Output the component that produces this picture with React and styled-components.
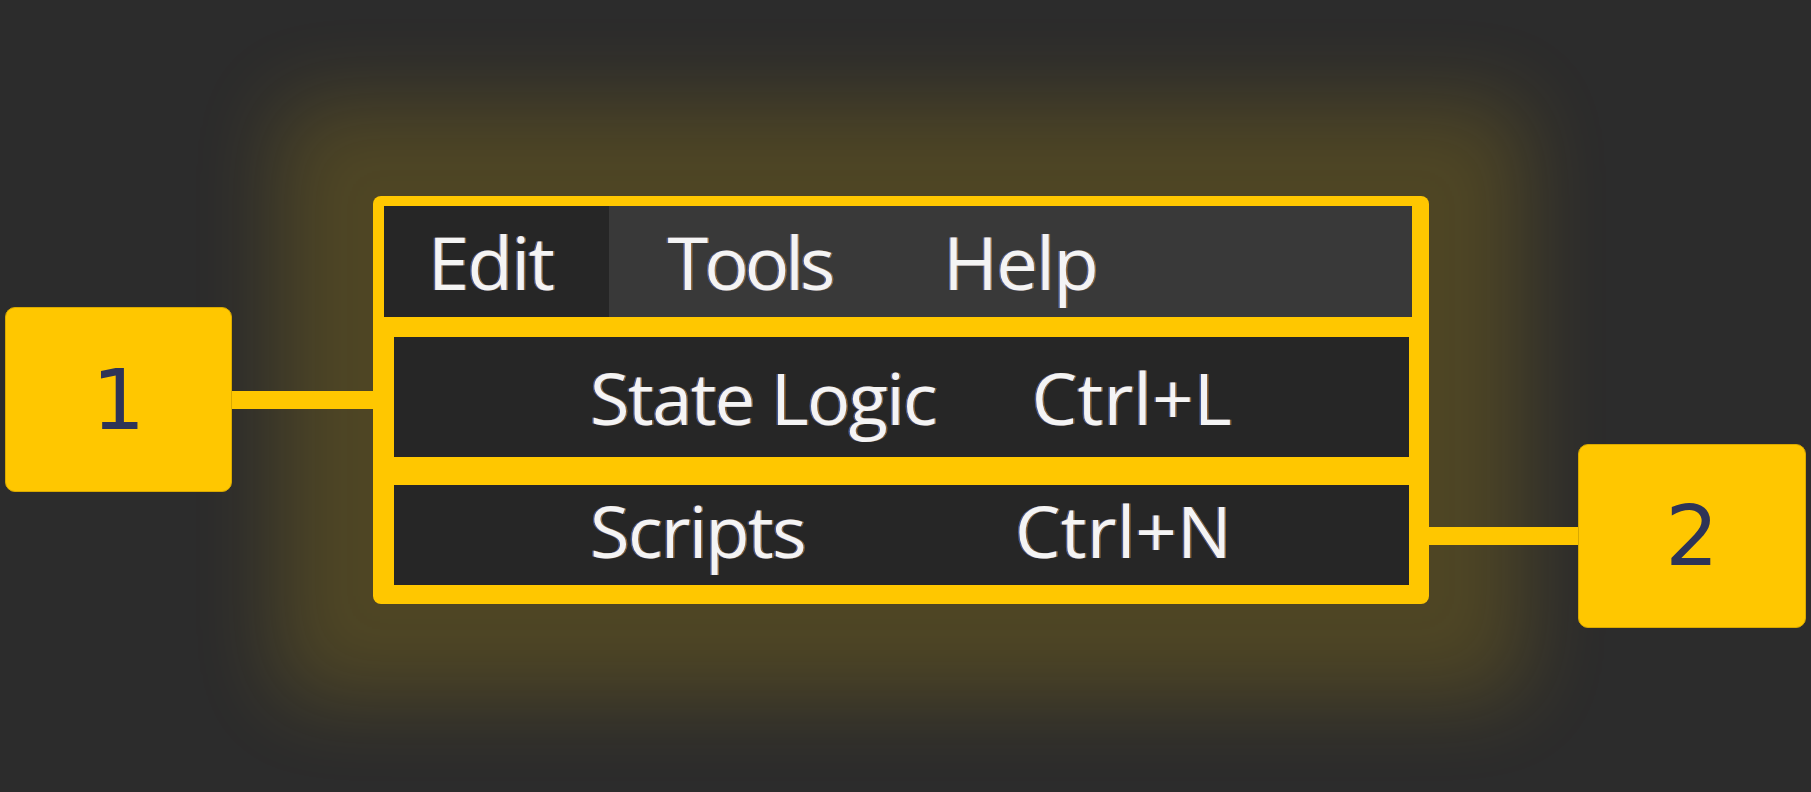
import React from "react";
import styled, { createGlobalStyle, css } from "styled-components";

const GlobalStyle = createGlobalStyle`
  html, body {
    margin: 0;
    padding: 0;
    background: #2c2c2c;
  }
  body {
    width: 1811px;
    height: 792px;
    overflow: hidden;
    font-family: "Open Sans", "Noto Sans", sans-serif;
  }
`;

const YELLOW = "#ffc700";

const screenText = css`
  color: #f4f4f4;
  font-weight: 400;
  white-space: nowrap;
  text-shadow: 1.5px 0 0 rgba(225, 150, 70, 0.55),
    -1.5px 0 0 rgba(90, 130, 235, 0.55);
`;

const Stage = styled.div`
  display: flex;
  align-items: flex-start;
  box-sizing: border-box;
  width: 1811px;
  height: 792px;
  padding: 196px 0 0 5px;
`;

const Callout = styled.div`
  display: flex;
  align-items: center;
  margin-top: ${(p) => p.$offset}px;
  position: relative;
  z-index: 1;
  flex-shrink: 0;
`;

const Badge = styled.div`
  width: ${(p) => p.$w}px;
  height: ${(p) => p.$h}px;
  box-sizing: border-box;
  background: ${YELLOW};
  border: 1px solid #d9a900;
  border-radius: 10px;
  display: flex;
  align-items: center;
  justify-content: center;
  font-family: "DejaVu Sans", "Open Sans", sans-serif;
  font-size: 84px;
  line-height: 1;
  color: #2e3457;
`;

const Leader = styled.div`
  width: ${(p) => p.$len}px;
  height: 18px;
  background: ${YELLOW};
`;

const Frame = styled.div`
  width: 1056px;
  height: 408px;
  flex-shrink: 0;
  box-sizing: border-box;
  background: ${YELLOW};
  border-radius: 8px;
  padding: 10px 0 19px;
  display: flex;
  flex-direction: column;
  box-shadow: 0 0 85px 95px rgba(255, 199, 0, 0.17);
`;

const MenuBar = styled.div`
  display: flex;
  height: 111px;
  margin: 0 17px 0 11px;
  background: #393939;
`;

const MenuItem = styled.div`
  display: flex;
  align-items: center;
  padding: 0 ${(p) => p.$padR}px 0 ${(p) => p.$padL}px;
  background: ${(p) => (p.$active ? "#262626" : "transparent")};
  font-size: 74px;
  letter-spacing: ${(p) => p.$track}px;
  ${screenText}
`;

const Row = styled.div`
  display: flex;
  align-items: center;
  justify-content: space-between;
  box-sizing: border-box;
  height: ${(p) => p.$h}px;
  margin: ${(p) => p.$gap}px 20px 0 21px;
  padding: 0 177px ${(p) => p.$lift}px 196px;
  background: #262626;
  font-size: 72px;
  ${screenText}
`;

const Label = styled.span`
  letter-spacing: -1.5px;
`;

const Shortcut = styled.span`
  letter-spacing: 0.5px;
`;

const menus = [
  { name: "Edit", active: true, l: 44, r: 56, track: -1.5 },
  { name: "Tools", l: 58, r: 58, track: -4 },
  { name: "Help", l: 54, r: 52, track: -1.5 },
];

const items = [
  { label: "State Logic", key: "Ctrl+L", h: 120, gap: 20, lift: 0 },
  { label: "Scripts", key: "Ctrl+N", h: 100, gap: 28, lift: 10 },
];

export default function App() {
  return (
    <>
      <GlobalStyle />
      <Stage>
        <Callout $offset={111}>
          <Badge $w={227} $h={185}>1</Badge>
          <Leader $len={141} />
        </Callout>
        <Frame>
          <MenuBar>
            {menus.map((m) => (
              <MenuItem
                key={m.name}
                $active={m.active}
                $padL={m.l}
                $padR={m.r}
                $track={m.track}
              >
                {m.name}
              </MenuItem>
            ))}
          </MenuBar>
          {items.map((it) => (
            <Row key={it.label} $h={it.h} $gap={it.gap} $lift={it.lift}>
              <Label>{it.label}</Label>
              <Shortcut>{it.key}</Shortcut>
            </Row>
          ))}
        </Frame>
        <Callout $offset={248}>
          <Leader $len={149} />
          <Badge $w={228} $h={184}>2</Badge>
        </Callout>
      </Stage>
    </>
  );
}
